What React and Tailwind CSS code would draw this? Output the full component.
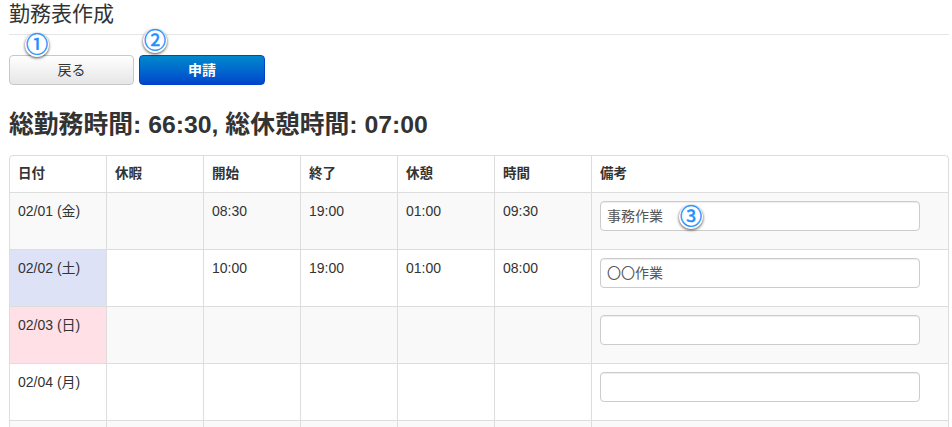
const rows = [
  { date: '02/01 (金)', start: '08:30', end: '19:00', rest: '01:00', time: '09:30', note: '事務作業', bg: 'bg-[#f9f9f9]' },
  { date: '02/02 (土)', start: '10:00', end: '19:00', rest: '01:00', time: '08:00', note: '〇〇作業', bg: 'bg-white', dateBg: 'bg-[#dee2f7]' },
  { date: '02/03 (日)', bg: 'bg-[#f9f9f9]', dateBg: 'bg-[#ffe0e6]' },
  { date: '02/04 (月)', bg: 'bg-white' },
  { date: '', bg: 'bg-[#f9f9f9]', empty: true },
]

const heads = ['日付', '休暇', '開始', '終了', '休憩', '時間', '備考']

// 丸数字の注釈
function Badge({ n, className }) {
  return (
    <span className={`absolute flex items-center justify-center w-[24px] h-[24px] rounded-full bg-white text-[#1e8fff] text-[22px] font-normal leading-none [-webkit-text-stroke:0.5px_#1e8fff] shadow-[0_1px_3px_rgba(0,0,0,0.7)] ${className}`}>
      {n}
    </span>
  )
}

function Cell({ children, className = '' }) {
  return (
    <td className={`border-l border-t border-[#dddddd] first:border-l-0 px-2 pt-[9px] align-top text-[14px] leading-[18px] text-[#333333] ${className}`}>
      {children}
    </td>
  )
}

export default function App() {
  return (
    <div className="h-[427px] w-[952px] overflow-hidden bg-white font-['Liberation_Sans','Noto_Sans_CJK_JP',sans-serif] text-[#333333]">
      <div className="relative pl-[9px] pr-[3px]">
        <h1 className="h-[35px] border-b border-[#e5e5e5] text-[21px] leading-[28px] font-normal text-[#333333]">勤務表作成</h1>

        <div className="relative flex gap-[5px] pt-5">
          <button className="h-[30px] w-[125px] rounded border border-[#c8c8c8] bg-gradient-to-b from-white to-[#e6e6e6] text-[14px] text-[#333333]">戻る</button>
          <button className="h-[30px] w-[126px] rounded border border-[#0044cc] bg-gradient-to-b from-[#0088cc] to-[#0044cc] text-[14px] font-bold text-white">申請</button>
          <Badge n="①" className="left-[16px] top-[-2px]" />
          <Badge n="②" className="left-[134px] top-[-6px]" />
        </div>

        <h2 className="mt-[24px] mb-[14px] text-[24.8px] leading-[32px] font-bold text-[#333333]">総勤務時間: 66:30, 総休憩時間: 07:00</h2>

        <table className="w-[940px] table-fixed border-separate border-spacing-0 rounded border-r border-b border-l border-t border-[#dddddd] [&_tr:first-child_th]:border-t-0">
          <colgroup>
            <col className="w-[96px]" />
            <col className="w-[97px]" />
            <col className="w-[97px]" />
            <col className="w-[97px]" />
            <col className="w-[97px]" />
            <col className="w-[97px]" />
            <col />
          </colgroup>
          <thead>
            <tr>
              {heads.map((h) => (
                <th key={h} className="h-9 border-l border-[#dddddd] first:border-l-0 px-2 text-left text-[13.5px] font-bold text-[#333333]">{h}</th>
              ))}
            </tr>
          </thead>
          <tbody>
            {rows.map((r, i) => (
              <tr key={i} className={`h-[57px] ${r.bg}`}>
                <Cell className={r.dateBg}>{r.date}</Cell>
                <Cell />
                <Cell>{r.start}</Cell>
                <Cell>{r.end}</Cell>
                <Cell>{r.rest}</Cell>
                <Cell>{r.time}</Cell>
                <td className="relative border-l border-t border-[#dddddd] px-2 pt-2 align-top">
                  {!r.empty && (
                    <input
                      readOnly
                      value={r.note || ''}
                      className="block h-[30px] w-[320px] rounded border border-[#cccccc] bg-white px-[6px] pb-[3px] text-[14px] text-[#555555] shadow-[inset_0_1px_1px_rgba(0,0,0,0.075)]"
                    />
                  )}
                  {i === 0 && <Badge n="③" className="left-[87px] top-[12px]" />}
                </td>
              </tr>
            ))}
          </tbody>
        </table>
      </div>
    </div>
  )
}
